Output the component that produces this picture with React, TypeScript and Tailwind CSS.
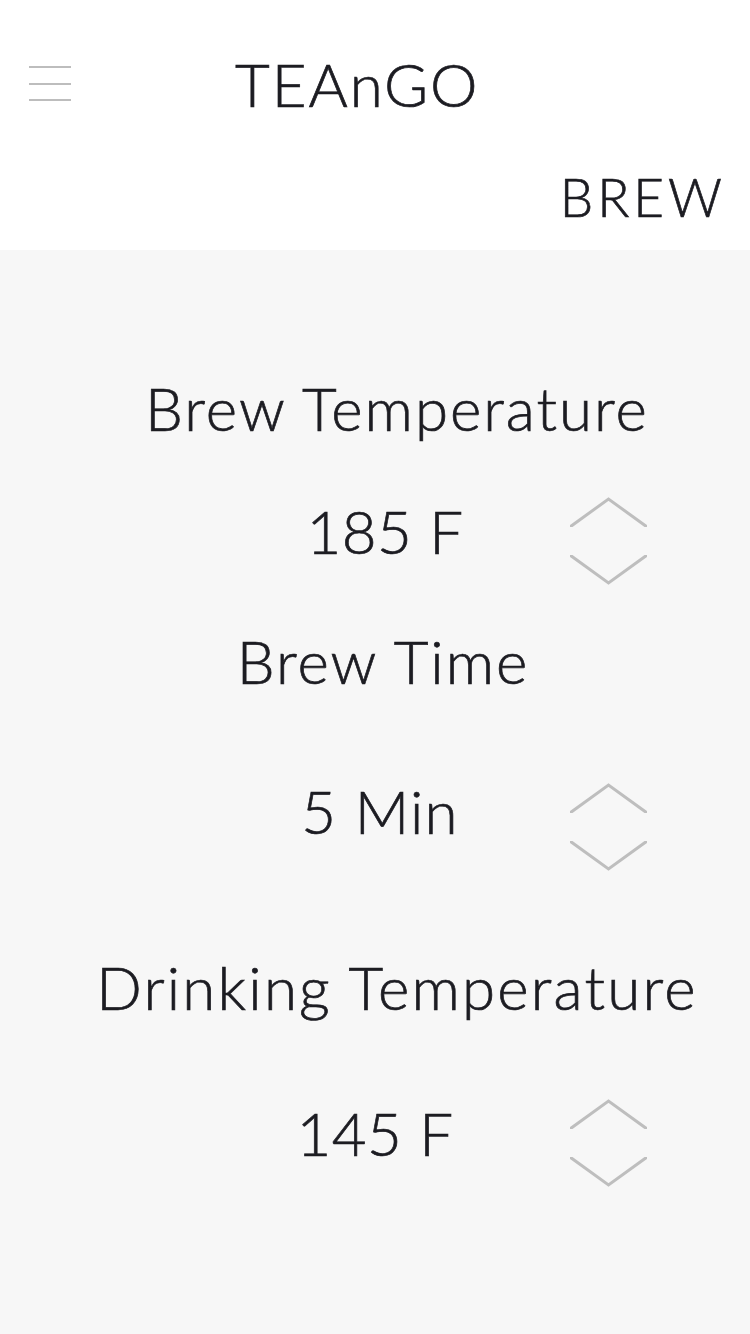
import React from "react";

const font = { fontFamily: "Lato, 'Noto Sans', sans-serif" };

function Chevrons({ className = "" }: { className?: string }) {
  return (
    <svg width="77" height="88" viewBox="0 0 77 88" className={className} fill="none">
      <defs>
        <clipPath id="cu">
          <rect x="0" y="0" width="77" height="30" />
        </clipPath>
        <clipPath id="cd">
          <rect x="0" y="58" width="77" height="30" />
        </clipPath>
      </defs>
      <polyline
        points="-5,33.6 38.5,2 82,33.6"
        stroke="#bebebe"
        strokeWidth="3"
        clipPath="url(#cu)"
      />
      <polyline
        points="-5,54.4 38.5,86 82,54.4"
        stroke="#bebebe"
        strokeWidth="3"
        clipPath="url(#cd)"
      />
    </svg>
  );
}

export default function App() {
  return (
    <div
      className="w-[750px] h-[1334px] bg-[#f7f7f7] text-[#1c1c22] font-light [-webkit-text-stroke:0.7px_#1c1c22]"
      style={font}
    >
      <header className="h-[250px] bg-white flex flex-col">
        <div className="flex items-start pl-[29px] pt-[54px]">
          <div className="w-[42px] mt-[12px] flex flex-col gap-[14.5px]">
            <div className="h-[2px] bg-[#bdbdbd]" />
            <div className="h-[2px] bg-[#bdbdbd]" />
            <div className="h-[2px] bg-[#bdbdbd]" />
          </div>
          <div className="ml-[164px] text-[60px] leading-none tracking-[2px]">TEAnGO</div>
        </div>
        <div className="flex justify-end pr-[24px] mt-[56px]">
          <div className="text-[53px] leading-none tracking-[4px]">BREW</div>
        </div>
      </header>
      <main className="flex flex-col pt-[128px]">
        <div className="text-[60px] leading-none text-center pl-[44px] tracking-[2px]">Brew Temperature</div>
        <div className="flex items-start mt-[59px]">
          <div className="w-[570px] pl-[200px] text-center text-[60px] leading-none mt-[4px] tracking-[0.5px]">185 F</div>
          <Chevrons />
        </div>
        <div className="text-[60px] leading-none text-center pl-[16px] mt-[46px] tracking-[2px]">Brew Time</div>
        <div className="flex items-start mt-[90px]">
          <div className="w-[570px] pl-[190px] text-center text-[60px] leading-none tracking-[1.2px]">5 Min</div>
          <Chevrons className="mt-[2px]" />
        </div>
        <div className="text-[60px] leading-none text-center pl-[44px] mt-[86px] tracking-[2.2px]">Drinking Temperature</div>
        <div className="flex items-start mt-[82px]">
          <div className="w-[570px] pl-[180px] text-center text-[60px] leading-none mt-[4px] tracking-[0.5px]">145 F</div>
          <Chevrons />
        </div>
      </main>
    </div>
  );
}
